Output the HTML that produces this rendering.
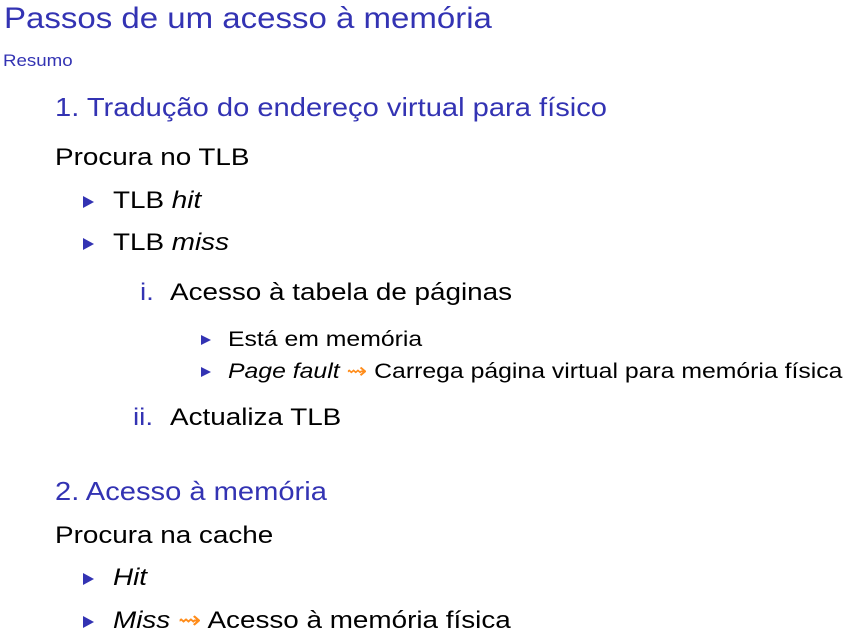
<!DOCTYPE html>
<html><head><meta charset="utf-8"><style>
body{margin:0;width:855px;height:640px;background:#fff;position:relative;overflow:hidden;font-family:"Liberation Sans","DejaVu Sans",sans-serif;color:#000}
.a{position:absolute;white-space:nowrap;line-height:1;transform-origin:0 0}
.b{color:#3333b3}
.tri{position:absolute;width:0;height:0;border-top:6px solid transparent;border-bottom:6px solid transparent;border-left:11px solid #3333b3}
.tri.s{border-top:5px solid transparent;border-bottom:5px solid transparent;border-left:10px solid #3333b3}
.or{color:#ff8c1a;font-weight:normal}
.x1{transform:scaleX(1.1)}
.x2{transform:scaleX(1.12)}
.x3{transform:scaleX(1.16)}
.x4{transform:scaleX(1.18)}
</style></head><body>
<div class="a b x1" style="left:4px;top:4px;font-size:30px">Passos de um acesso à memória</div>
<div class="a b x1" style="left:3px;top:52px;font-size:17px">Resumo</div>
<div class="a b x2" style="left:55px;top:94px;font-size:26px">1. Tradução do endereço virtual para físico</div>
<div class="a x3" style="left:55px;top:146px;font-size:24px">Procura no TLB</div>
<div class="tri" style="left:83px;top:196px"></div>
<div class="a x3" style="left:113px;top:189px;font-size:24px">TLB <i>hit</i></div>
<div class="tri" style="left:83px;top:238px"></div>
<div class="a x3" style="left:113px;top:231px;font-size:24px">TLB <i>miss</i></div>
<div class="a b x3" style="left:140px;top:281px;font-size:24px">i.</div>
<div class="a x3" style="left:170px;top:281px;font-size:24px">Acesso à tabela de páginas</div>
<div class="tri s" style="left:201px;top:335px"></div>
<div class="a x4" style="left:228px;top:329px;font-size:21px">Está em memória</div>
<div class="tri s" style="left:201px;top:367px"></div>
<div class="a x4" style="left:228px;top:361px;font-size:21px"><i>Page fault</i> <span class="or">⇝</span> Carrega página virtual para memória física</div>
<div class="a b x3" style="left:133px;top:406px;font-size:24px">ii.</div>
<div class="a x3" style="left:170px;top:406px;font-size:24px">Actualiza TLB</div>
<div class="a b x2" style="left:55px;top:478px;font-size:26px">2. Acesso à memória</div>
<div class="a x3" style="left:55px;top:524px;font-size:24px">Procura na cache</div>
<div class="tri" style="left:83px;top:573px"></div>
<div class="a x3" style="left:113px;top:566px;font-size:24px"><i>Hit</i></div>
<div class="tri" style="left:83px;top:616px"></div>
<div class="a x3" style="left:113px;top:609px;font-size:24px"><i>Miss</i> <span class="or">⇝</span> Acesso à memória física</div>
</body></html>
